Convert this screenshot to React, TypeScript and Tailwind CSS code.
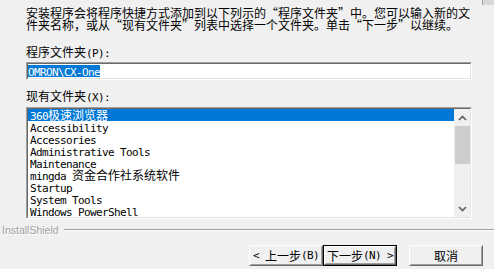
import React from "react";

const M = ({ children }: { children: React.ReactNode }) => (
  <span className="font-['DejaVu_Sans_Mono',monospace] text-[11px] tracking-[-0.62px]">{children}</span>
);

const Chevron = ({ down }: { down?: boolean }) => (
  <svg width="9" height="6" viewBox="0 0 9 6">
    <path
      d={down ? "M1 1 L4.5 4.5 L8 1" : "M1 5 L4.5 1.5 L8 5"}
      fill="none"
      stroke="#606060"
      strokeWidth="1.7"
    />
  </svg>
);

const items: React.ReactNode[] = [
  <><M>360</M>极速浏览器</>,
  <M>Accessibility</M>,
  <M>Accessories</M>,
  <M>Administrative Tools</M>,
  <M>Maintenance</M>,
  <><M>{"mingda\u00a0"}</M>资金合作社系统软件</>,
  <M>Startup</M>,
  <M>System Tools</M>,
  <M>Windows PowerShell</M>,
];

const Raised = ({ children, def }: { children: React.ReactNode; def?: boolean }) => (
  <div className={def ? "border border-black w-[74px] h-[21px] flex" : "w-[74px] h-[21px] flex"}>
    <div className="flex-1 flex border border-t-white border-l-white border-b-[#696969] border-r-[#696969]">
      <div className="flex-1 flex items-center justify-center border border-t-[#f0f0f0] border-l-[#f0f0f0] border-b-[#a0a0a0] border-r-[#a0a0a0] leading-none whitespace-nowrap">
        {children}
      </div>
    </div>
  </div>
);

export default function App() {
  return (
    <div
      lang="zh-CN"
      className="relative w-[494px] h-[269px] bg-[#f0f0f0] overflow-hidden flex flex-col font-['Noto_Sans_CJK_SC',sans-serif] text-[12px] text-black"
    >
      <div className="absolute right-0 top-0 w-[12px] h-[5px] bg-[#d9d9d9] border-l border-l-[#a0a0a0]" />
      <div className="pl-[26px] pt-[7px] leading-[12px] whitespace-nowrap">
        安装程序会将程序快捷方式添加到以下列示的“程序文件夹”中。您可以输入新的文
        <br />
        件夹名称，或从“现有文件夹”列表中选择一个文件夹。单击“下一步”以继续。
      </div>
      <div className="pl-[26px] mt-[15px] leading-[12px]">
        程序文件夹<M>(P):</M>
      </div>
      <div className="ml-[26px] mt-[2px] w-[446px] h-[18px] flex border border-t-[#a0a0a0] border-l-[#a0a0a0] border-b-white border-r-white">
        <div className="flex-1 bg-white border border-t-[#696969] border-l-[#696969] border-b-[#e3e3e3] border-r-[#e3e3e3] pt-[1px]">
          <span className="inline-block h-[12px] leading-[12px] bg-[#0078d7] text-white align-top">
            <M>OMRON\CX-One</M>
          </span>
        </div>
      </div>
      <div className="pl-[26px] mt-[10px] leading-[12px]">
        现有文件夹<M>(X):</M>
      </div>
      <div className="ml-[26px] mt-[3px] w-[446px] h-[112px] flex border border-t-[#a0a0a0] border-l-[#a0a0a0] border-b-white border-r-white">
        <div className="flex-1 flex bg-white border border-t-[#696969] border-l-[#696969] border-b-[#e3e3e3] border-r-[#e3e3e3]">
          <div className="flex-1 flex flex-col">
            {items.map((it, i) => (
              <div
                key={i}
                className={
                  i === 0
                    ? "h-[12px] leading-[12px] pl-[2px] whitespace-nowrap bg-[#0078d7] text-white"
                    : "h-[12px] leading-[12px] pl-[2px] whitespace-nowrap"
                }
              >
                {it}
              </div>
            ))}
          </div>
          <div className="w-[16px] bg-[#f0f0f0] flex flex-col">
            <div className="h-[17px] flex items-center justify-center">
              <Chevron />
            </div>
            <div className="h-[38px] ml-[1px] bg-[#cdcdcd]" />
            <div className="flex-1" />
            <div className="h-[17px] flex items-center justify-center">
              <Chevron down />
            </div>
          </div>
        </div>
      </div>
      <div className="mt-[4px] h-[14px] flex items-center">
        <span className="pl-[2px] font-['Liberation_Sans',sans-serif] text-[10.5px] text-[#a0a0a0] [text-shadow:1px_1px_0_#ffffff] leading-none">
          InstallShield
        </span>
        <div className="flex-1 ml-[5px] h-[2px] border-t border-t-[#a0a0a0] border-b border-b-white" />
      </div>
      <div className="mt-[8px] flex pl-[249px]">
        <Raised>
          <M>{"<\u00a0"}</M>上一步<M>(B)</M>
        </Raised>
        <Raised def>
          下一步<M>{"(N)\u00a0>"}</M>
        </Raised>
        <div className="ml-[12px]">
          <Raised>取消</Raised>
        </div>
      </div>
    </div>
  );
}
